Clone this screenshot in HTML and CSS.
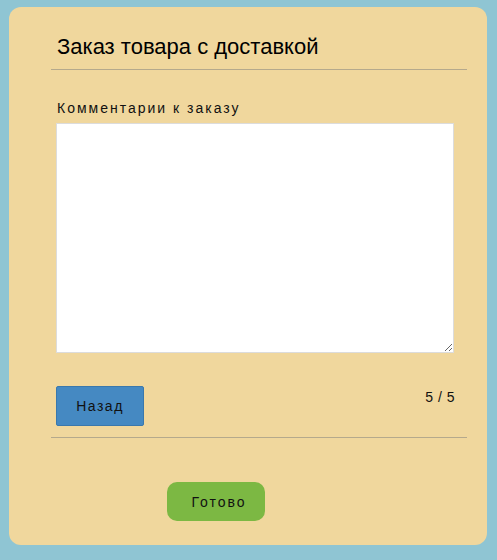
FILE: index.html
```html
<!DOCTYPE html>
<html lang="ru">
<head>
<meta charset="utf-8">
<link rel="stylesheet" href="styles.css">
</head>
<body>
<div class="card">
  <div class="section">
    <h1 class="title">Заказ товара с доставкой</h1>
  </div>
  <div class="field">
    <label class="label" for="c">Комментарии к заказу</label>
    <textarea id="c" class="area"></textarea>
  </div>
  <div class="nav">
    <button class="back">Назад</button>
    <span class="count">5 / 5</span>
  </div>
  <div class="footer">
    <button class="done">Готово</button>
  </div>
</div>
</body>
</html>
```
FILE: styles.css
```css
html, body {
  margin: 0;
  padding: 0;
  background: #8fc5d3;
}
body {
  padding: 7px 10px 0 9px;
  font-family: "Liberation Sans", Arial, sans-serif;
  color: #111;
}
.card {
  width: 478px;
  height: 538px;
  box-sizing: border-box;
  background: #f0d79d;
  border-radius: 12px;
  padding: 27px 20px 0 42px;
}
.section {
  border-bottom: 1px solid #b5a98c;
  padding: 0 0 9px 6px;
}
.title {
  margin: 0;
  font-family: "Liberation Sans", Arial, sans-serif;
  font-size: 22px;
  font-weight: normal;
  line-height: 26px;
  color: #000;
}
.field {
  padding: 29px 13px 0 5px;
  display: flex;
  flex-direction: column;
}
.label {
  font-family: "Liberation Sans", Arial, sans-serif;
  font-size: 14px;
  letter-spacing: 2px;
  line-height: 18px;
  padding-left: 1px;
  margin-bottom: 6px;
}
.area {
  box-sizing: border-box;
  width: 398px;
  height: 230px;
  margin: 0;
  border: 1px solid #dcdcdc;
  background: #fff;
  resize: vertical;
}
.nav {
  display: flex;
  justify-content: space-between;
  align-items: flex-start;
  padding: 33px 12px 11px 5px;
  border-bottom: 1px solid #b5a98c;
}
.back {
  width: 88px;
  height: 40px;
  background: #4589c2;
  border: 1px solid #3a78ad;
  border-radius: 2px;
  font-family: "Liberation Sans", Arial, sans-serif;
  font-size: 14px;
  letter-spacing: 1.5px;
  color: #111;
  padding: 0;
}
.count {
  font-family: "Liberation Sans", Arial, sans-serif;
  font-size: 14px;
  letter-spacing: 0.5px;
  line-height: 18px;
  margin-top: 2px;
}
.footer {
  padding: 44px 0 0 116px;
}
.done {
  width: 98px;
  height: 39px;
  background: #7cb843;
  border: none;
  border-radius: 10px;
  font-family: "Liberation Sans", Arial, sans-serif;
  font-size: 14px;
  letter-spacing: 2px;
  color: #111;
  padding: 0 0 0 6px;
}
```
